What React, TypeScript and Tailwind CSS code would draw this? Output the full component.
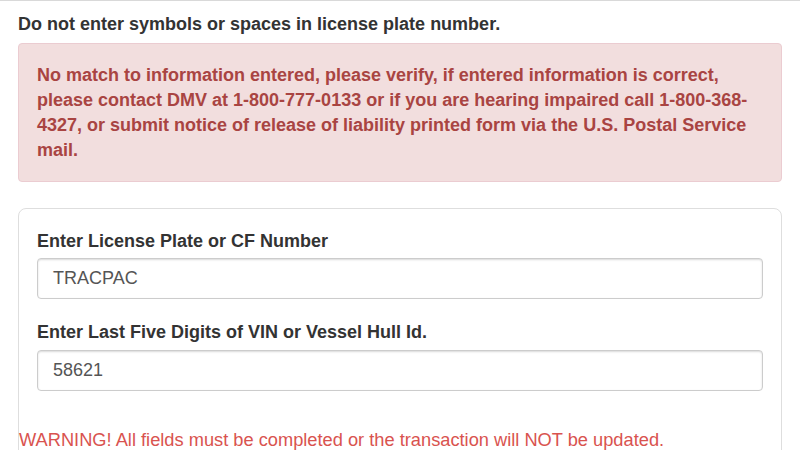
export default function App() {
  return (
    <div className="w-[800px] h-[450px] overflow-hidden bg-white border-t border-[#d9d9d9] font-['Liberation_Sans',Arial,sans-serif] text-[18px]">
      <div className="px-[18px]">
        <p className="pt-[10px] font-bold text-[#333] leading-[26px]">
          Do not enter symbols or spaces in license plate number.
        </p>

        <div className="mt-[6px] h-[139px] rounded-[4px] border border-[#ebccd1] bg-[#f2dede] pl-[18px] pr-[30px] pt-[19px]">
          <p className="font-bold text-[#a94442] leading-[25px]">
            No match to information entered, please verify, if entered information is correct, please contact DMV at
            1-800-777-0133 or if you are hearing impaired call 1-800-368-4327, or submit notice of release of liability
            printed form via the U.S. Postal Service mail.
          </p>
        </div>

        <div className="mt-[26px] h-[260px] rounded-[8px] border border-[#dedede] px-[18px] pt-[20px]">
          <label className="block font-bold text-[#333] leading-[24px]">Enter License Plate or CF Number</label>
          <div className="mt-[5px] h-[41px] rounded-[4px] border border-[#ccc] shadow-[inset_0_1px_2px_rgba(0,0,0,0.15)] px-[15px] flex items-center text-[#555]">
            TRACPAC
          </div>

          <label className="mt-[21px] block font-bold text-[#333] leading-[24px]">
            Enter Last Five Digits of VIN or Vessel Hull Id.
          </label>
          <div className="mt-[6px] h-[41px] rounded-[4px] border border-[#ccc] shadow-[inset_0_1px_2px_rgba(0,0,0,0.15)] px-[15px] flex items-center text-[#555]">
            58621
          </div>

          <p className="mt-[37px] -ml-[18px] text-[#d9534f] text-[18.25px] leading-[24px]">
            WARNING! All fields must be completed or the transaction will NOT be updated.
          </p>
        </div>
      </div>
    </div>
  );
}
